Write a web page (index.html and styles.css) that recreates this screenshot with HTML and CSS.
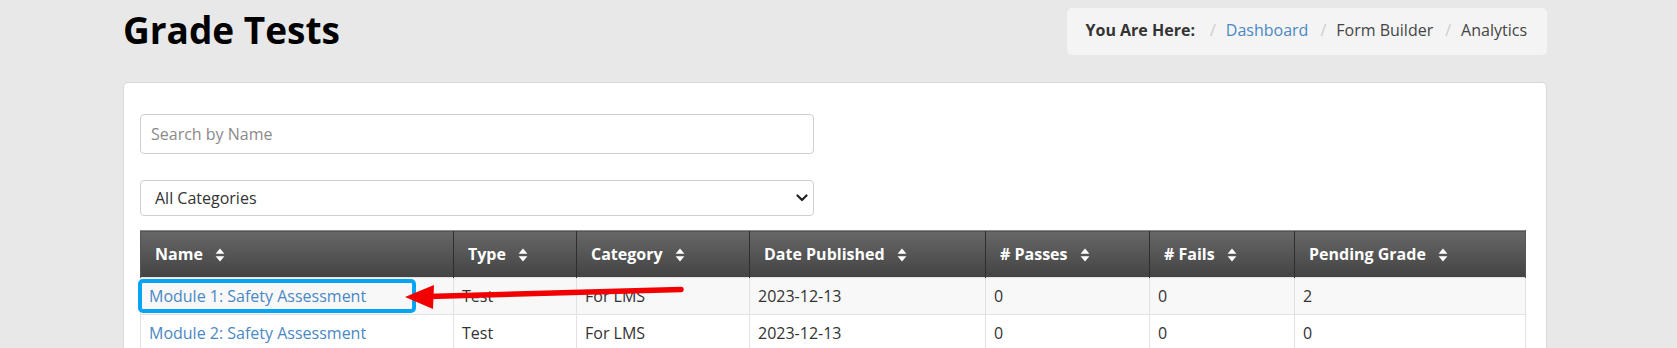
FILE: index.html
```html
<!DOCTYPE html>
<html lang="en">
<head>
<meta charset="utf-8">
<title>Grade Tests</title>
<link rel="stylesheet" href="styles.css">
</head>
<body>
<div class="page">
  <div class="page-head">
    <h1 class="title">Grade Tests</h1>
    <ol class="crumbs">
      <li class="crumb-label">You Are Here:</li>
      <li><a href="#">Dashboard</a></li>
      <li>Form Builder</li>
      <li>Analytics</li>
    </ol>
  </div>

  <div class="card">
    <input class="field search" type="text" placeholder="Search by Name">
    <div class="select-wrap">
      <div class="field select">
        <span>All Categories</span>
        <svg class="chev" width="12" height="8" viewBox="0 0 12 8"><path d="M1.5 1.5 L6 6 L10.5 1.5" fill="none" stroke="#222" stroke-width="2.2" stroke-linecap="round" stroke-linejoin="round"/></svg>
      </div>
    </div>

    <table class="grid">
      <colgroup>
        <col style="width:313px"><col style="width:123px"><col style="width:173px"><col style="width:236px"><col style="width:164px"><col style="width:145px"><col>
      </colgroup>
      <thead>
        <tr>
          <th>Name <svg class="sort" viewBox="0 0 10 14"><path d="M5 0.6 L9.4 5.8 H0.6 Z M5 13.4 L9.4 8.2 H0.6 Z"/></svg></th>
          <th>Type <svg class="sort" viewBox="0 0 10 14"><path d="M5 0.6 L9.4 5.8 H0.6 Z M5 13.4 L9.4 8.2 H0.6 Z"/></svg></th>
          <th>Category <svg class="sort" viewBox="0 0 10 14"><path d="M5 0.6 L9.4 5.8 H0.6 Z M5 13.4 L9.4 8.2 H0.6 Z"/></svg></th>
          <th>Date Published <svg class="sort" viewBox="0 0 10 14"><path d="M5 0.6 L9.4 5.8 H0.6 Z M5 13.4 L9.4 8.2 H0.6 Z"/></svg></th>
          <th># Passes <svg class="sort" viewBox="0 0 10 14"><path d="M5 0.6 L9.4 5.8 H0.6 Z M5 13.4 L9.4 8.2 H0.6 Z"/></svg></th>
          <th># Fails <svg class="sort" viewBox="0 0 10 14"><path d="M5 0.6 L9.4 5.8 H0.6 Z M5 13.4 L9.4 8.2 H0.6 Z"/></svg></th>
          <th>Pending Grade <svg class="sort" viewBox="0 0 10 14"><path d="M5 0.6 L9.4 5.8 H0.6 Z M5 13.4 L9.4 8.2 H0.6 Z"/></svg></th>
        </tr>
      </thead>
      <tbody>
        <tr class="odd">
          <td><a href="#">Module 1: Safety Assessment</a></td>
          <td>Test</td>
          <td>For LMS</td>
          <td>2023-12-13</td>
          <td>0</td>
          <td>0</td>
          <td>2</td>
        </tr>
        <tr>
          <td><a href="#">Module 2: Safety Assessment</a></td>
          <td>Test</td>
          <td>For LMS</td>
          <td>2023-12-13</td>
          <td>0</td>
          <td>0</td>
          <td>0</td>
        </tr>
      </tbody>
    </table>
  </div>
</div>

<svg class="annot" width="1677" height="348" viewBox="0 0 1677 348">
  <rect x="140" y="281" width="274" height="30" rx="3" fill="none" stroke="#08a4f4" stroke-width="4"/>
  <line x1="681" y1="289.5" x2="428" y2="296.5" stroke="#f20000" stroke-width="5.5" stroke-linecap="round"/>
  <polygon points="405,297 434,285 433,309" fill="#f20000"/>
</svg>
</body>
</html>
```

FILE: styles.css
```css
* { box-sizing: border-box; }

body {
  margin: 0;
  background: #e8e8e8;
  font-family: "Open Sans", "Liberation Sans", sans-serif;
  font-size: 16px;
  color: #333;
  position: relative;
  overflow: hidden;
  height: 348px;
}

a { color: #4a88c4; text-decoration: none; }

.page {
  margin: 0 130px 0 123px;
}

.page-head {
  display: flex;
  justify-content: space-between;
  align-items: flex-start;
  padding-top: 8px;
}

.title {
  margin: 0;
  font-size: 37px;
  font-weight: 700;
  color: #000;
  line-height: 44px;
}

.crumbs {
  list-style: none;
  margin: 0;
  height: 47px;
  padding: 0 20px 3px 19px;
  background: #f4f4f4;
  border-radius: 5px;
  display: flex;
  align-items: center;
  color: #444;
}

.crumbs li + li::before {
  content: "/";
  color: #ccc;
  padding: 0 10px 0 12px;
}

.crumbs li.crumb-label { font-weight: 700; color: #333; }
.crumbs li.crumb-label + li::before { padding-left: 15px; }

.card {
  margin-top: 27px;
  background: #fff;
  border: 1px solid #d9d9d9;
  border-radius: 5px;
  padding: 31px 20px 0 16px;
  height: 300px;
}

.field {
  display: flex;
  align-items: center;
  width: 674px;
  border: 1px solid #cfcfcf;
  border-radius: 4px;
  background: #fff;
  font-family: "Open Sans", "Liberation Sans", sans-serif;
  font-size: 16px;
  color: #333;
}

.search {
  height: 40px;
  padding: 0 10px;
  outline: none;
}
.search::placeholder { color: #8a8a8a; }

.select-wrap { margin-top: 26px; }

.select {
  height: 36px;
  padding: 0 5px 0 14px;
  justify-content: space-between;
}

.grid {
  margin-top: 14px;
  width: 100%;
  border-collapse: collapse;
  table-layout: fixed;
}

.grid th {
  height: 47px;
  text-align: left;
  padding: 0 14px;
  color: #fff;
  font-weight: 700;
  background: linear-gradient(#676767, #434343);
  border-left: 1px solid #2e2e2e;
  border-top: 1px solid #8a8a8a;
  white-space: nowrap;
}
.grid th:first-child { border-left: 1px solid #555; }
.grid th:last-child { border-right: 1px solid #555; }

.sort {
  width: 10px;
  height: 14px;
  fill: #fff;
  margin-left: 8px;
  vertical-align: -2px;
}

.grid td {
  height: 37px;
  padding: 0 8px;
  border: 1px solid #e2e2e2;
  white-space: nowrap;
}

.grid tr.odd td { background: #f8f8f8; }

.annot {
  position: absolute;
  top: 0;
  left: 0;
  pointer-events: none;
}
```
